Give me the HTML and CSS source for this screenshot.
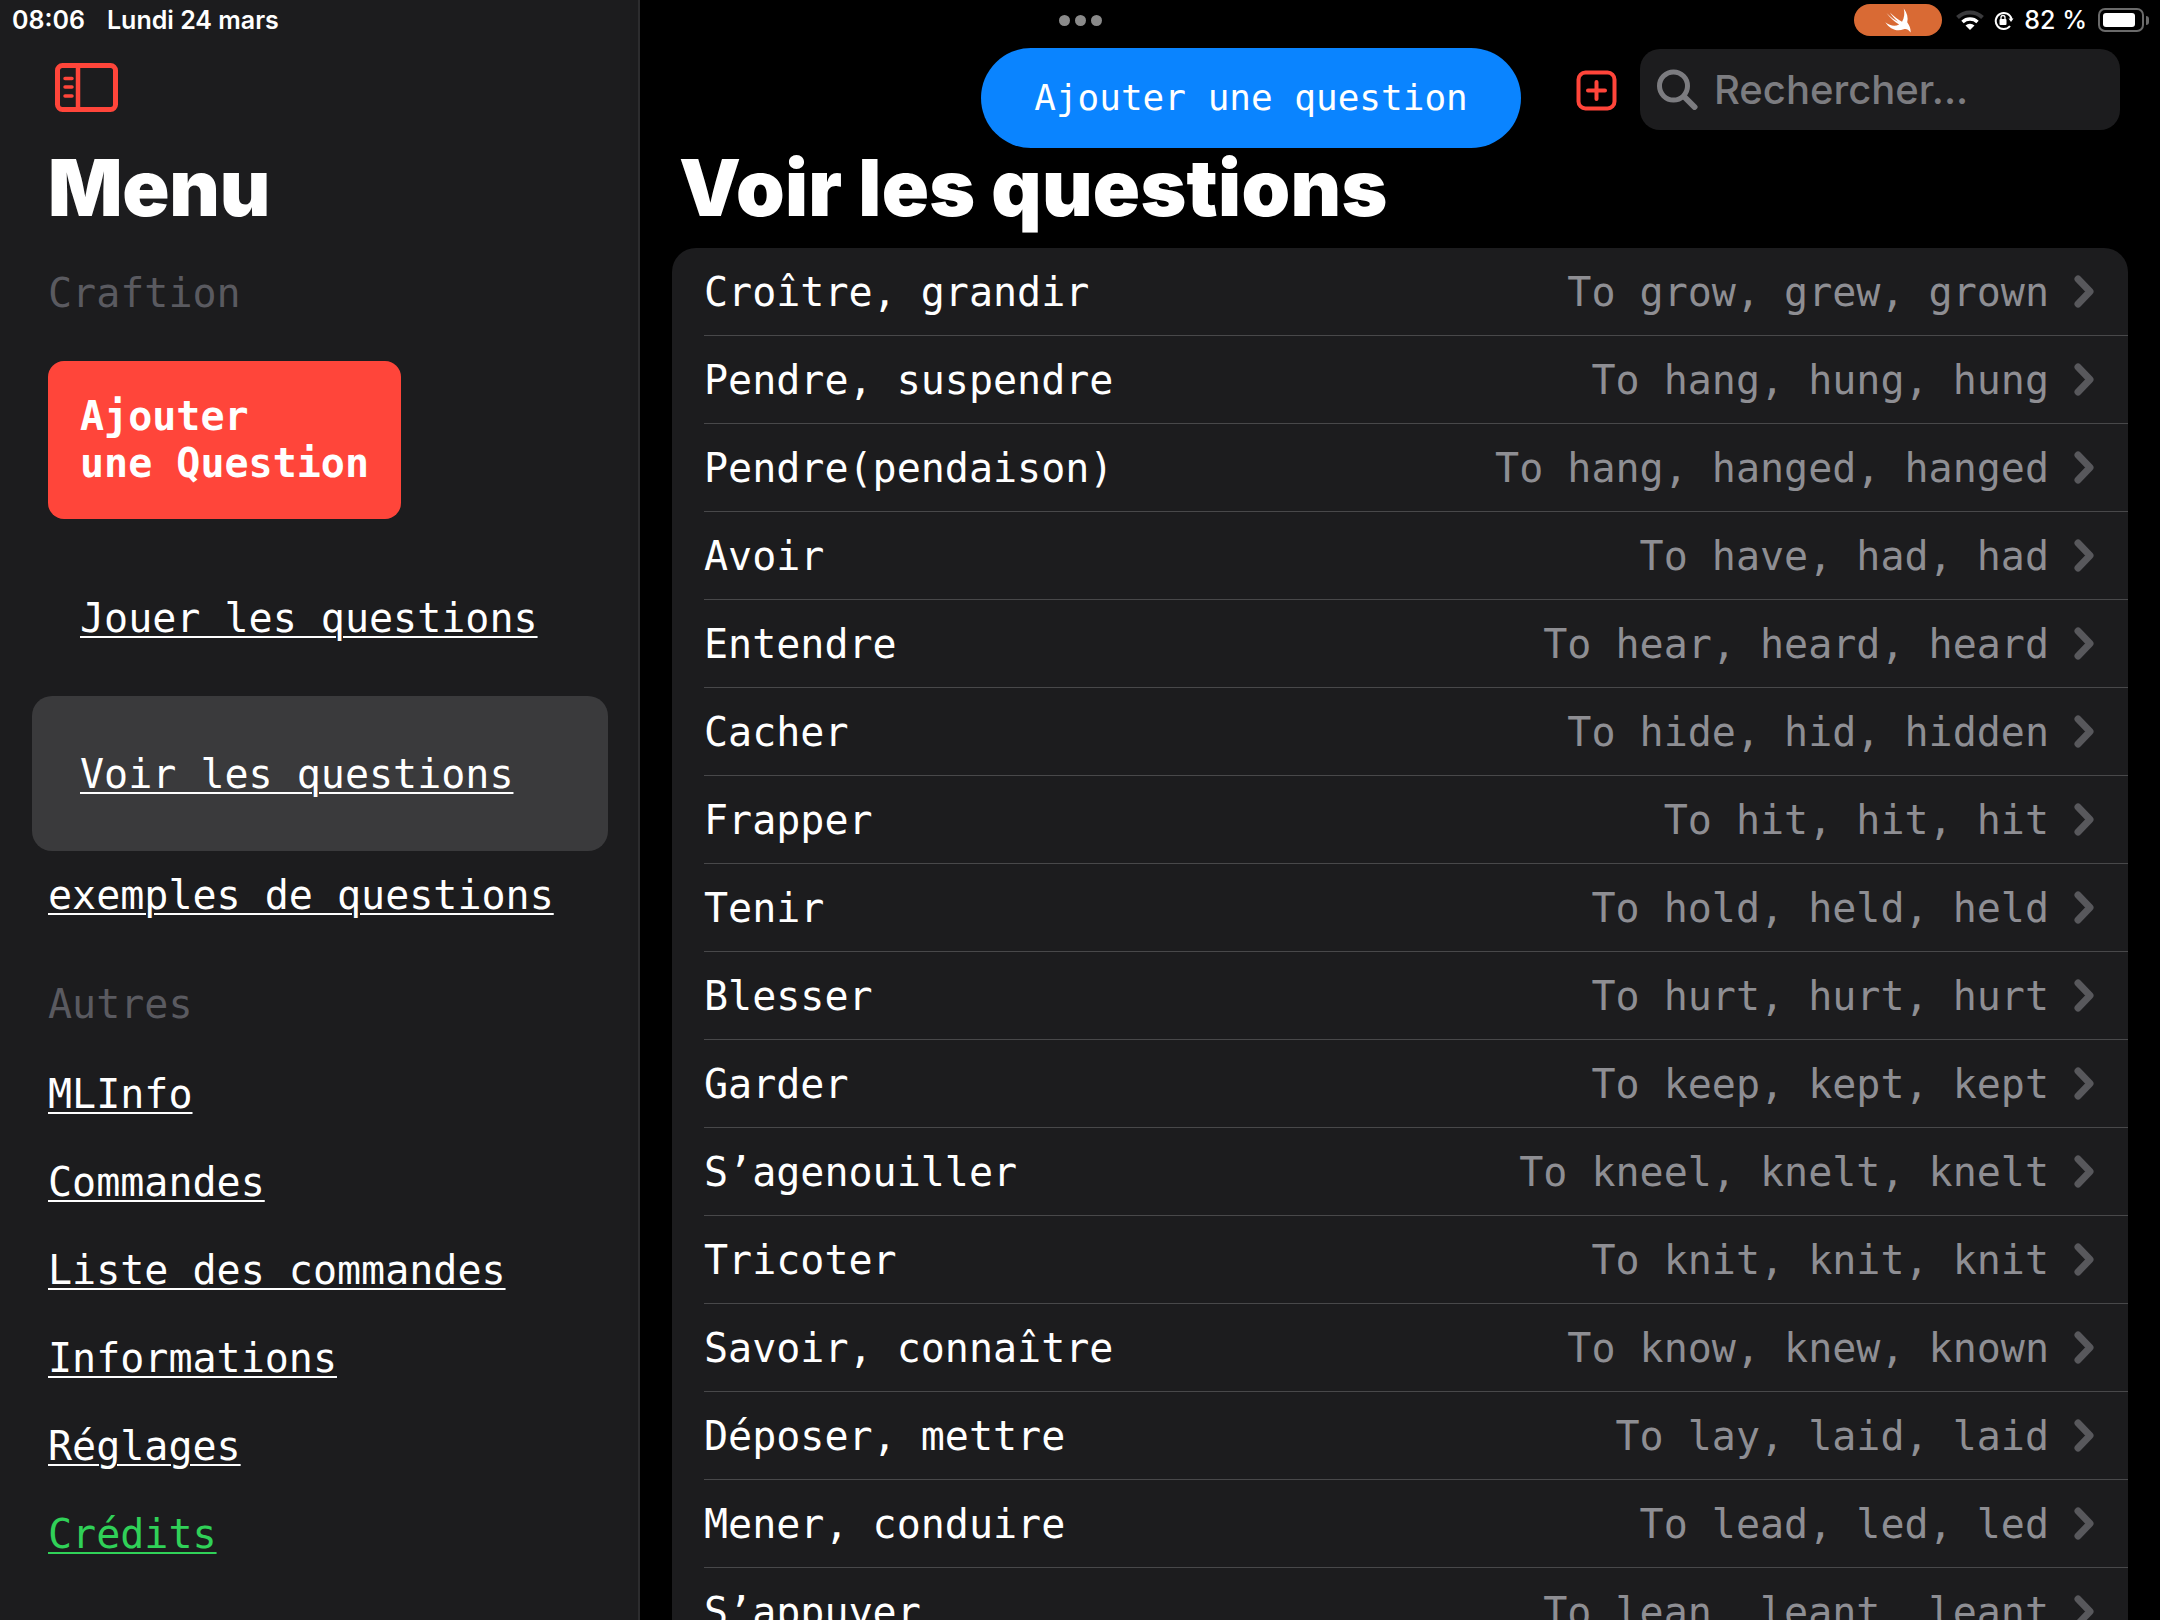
FILE: index.html
```html
<!DOCTYPE html>
<html lang="fr">
<head>
    <meta charset="utf-8" />
    <title>Craftion</title>
    <link rel="stylesheet" href="styles.css">
</head>
<body>
    <aside class="menu">
        <div class="statut-gauche">
            <span>08:06</span>
            <span>Lundi 24 mars</span>
        </div>
        <svg class="icone-menu" viewBox="0 0 63 49" fill="none" stroke="#ff453a">
            <rect x="2.500" y="2.500" width="58" height="44" rx="5" stroke-width="5" />
            <path d="M23 2v45" stroke-width="4.500" />
            <path d="M10 15.500h7M10 24h7M10 33h7" stroke-width="3.500" stroke-linecap="round" />
        </svg>
        <h1 class="titre">Menu</h1>
        <p class="section">Craftion</p>
        <a class="bouton-rouge">Ajouter<br>une Question</a>
        <a class="lien lien-jouer">Jouer les questions</a>
        <div class="selection"><a class="lien">Voir les questions</a></div>
        <a class="lien lien-exemples">exemples de questions</a>
        <p class="section section-autres">Autres</p>
        <nav class="liens">
            <a class="lien">MLInfo</a>
            <a class="lien">Commandes</a>
            <a class="lien">Liste des commandes</a>
            <a class="lien">Informations</a>
            <a class="lien">Réglages</a>
            <a class="lien vert">Crédits</a>
        </nav>
    </aside>

    <main class="contenu">
        <div class="statut">
            <div class="points"><i></i><i></i><i></i></div>
            <div class="statut-droite">
                <span class="pilule">
                    <svg viewBox="0 0 26 23" width="30" height="27" fill="#fff"><path d="M18 1C21 5 22 9 21 13 23 16 24 18 24 22 22 19 20 18.500 18 19 12 21.500 6 19 2 13 6 16 10 17 14 15 10 12.500 6 9 3 5 7 9 10 11 13 12.500 10 10 8 7.500 6 4.500 10 8.500 13 10.500 16.500 12.500 18.500 9 19 5 18 1z" /></svg>
                </span>
                <svg class="wifi" viewBox="0 0 28 20" fill="none">
                    <path d="M1.500 7.500a18 18 0 0 1 25 0" stroke="#3a3a3c" stroke-width="4" />
                    <path d="M6.500 12a11 11 0 0 1 15 0" stroke="#fff" stroke-width="3.500" />
                    <path d="M14 20l-4.500-4.500a6.500 6.500 0 0 1 9 0z" fill="#fff" />
                </svg>
                <svg class="verrou" viewBox="0 0 20 19" fill="none">
                    <path d="M16 15a8 8 0 1 1 1.500-7" stroke="#fff" stroke-width="2" />
                    <path d="M14.500 7.500h5L17 11z" fill="#fff" />
                    <rect x="5.500" y="8" width="7" height="6" rx="1" fill="#fff" />
                    <path d="M7 8V6.500a2 2 0 0 1 4 0V8" stroke="#fff" stroke-width="1.300" />
                </svg>
                <span class="pourcent">82 %</span>
                <span class="batterie"><i></i></span>
                <span class="borne"></span>
            </div>
        </div>

        <div class="barre">
            <a class="bouton-bleu">Ajouter une question</a>
            <svg class="icone-plus" viewBox="0 0 41 41" fill="none" stroke="#ff453a">
                <rect x="2.500" y="2.500" width="36" height="36" rx="7" stroke-width="4" />
                <path d="M20.500 12v17M12 20.500h17" stroke-width="4" stroke-linecap="round" />
            </svg>
            <div class="recherche">
                <svg viewBox="0 0 41 41" width="41" height="41" fill="none" stroke="#7c7c80">
                    <circle cx="16.500" cy="17" r="14" stroke-width="5" />
                    <path d="M27.500 28l10 10" stroke-width="6" stroke-linecap="round" />
                </svg>
                <span>Rechercher...</span>
            </div>
        </div>

        <h1 class="titre titre-page">Voir les questions</h1>

        <ul class="liste">
            <li><span>Croître, grandir</span><span class="verbe">To grow, grew, grown</span><svg class="fleche" viewBox="0 0 20 33" fill="none"><path d="M4 4l12 12.500L4 29" /></svg></li>
            <li><span>Pendre, suspendre</span><span class="verbe">To hang, hung, hung</span><svg class="fleche" viewBox="0 0 20 33" fill="none"><path d="M4 4l12 12.500L4 29" /></svg></li>
            <li><span>Pendre(pendaison)</span><span class="verbe">To hang, hanged, hanged</span><svg class="fleche" viewBox="0 0 20 33" fill="none"><path d="M4 4l12 12.500L4 29" /></svg></li>
            <li><span>Avoir</span><span class="verbe">To have, had, had</span><svg class="fleche" viewBox="0 0 20 33" fill="none"><path d="M4 4l12 12.500L4 29" /></svg></li>
            <li><span>Entendre</span><span class="verbe">To hear, heard, heard</span><svg class="fleche" viewBox="0 0 20 33" fill="none"><path d="M4 4l12 12.500L4 29" /></svg></li>
            <li><span>Cacher</span><span class="verbe">To hide, hid, hidden</span><svg class="fleche" viewBox="0 0 20 33" fill="none"><path d="M4 4l12 12.500L4 29" /></svg></li>
            <li><span>Frapper</span><span class="verbe">To hit, hit, hit</span><svg class="fleche" viewBox="0 0 20 33" fill="none"><path d="M4 4l12 12.500L4 29" /></svg></li>
            <li><span>Tenir</span><span class="verbe">To hold, held, held</span><svg class="fleche" viewBox="0 0 20 33" fill="none"><path d="M4 4l12 12.500L4 29" /></svg></li>
            <li><span>Blesser</span><span class="verbe">To hurt, hurt, hurt</span><svg class="fleche" viewBox="0 0 20 33" fill="none"><path d="M4 4l12 12.500L4 29" /></svg></li>
            <li><span>Garder</span><span class="verbe">To keep, kept, kept</span><svg class="fleche" viewBox="0 0 20 33" fill="none"><path d="M4 4l12 12.500L4 29" /></svg></li>
            <li><span>S’agenouiller</span><span class="verbe">To kneel, knelt, knelt</span><svg class="fleche" viewBox="0 0 20 33" fill="none"><path d="M4 4l12 12.500L4 29" /></svg></li>
            <li><span>Tricoter</span><span class="verbe">To knit, knit, knit</span><svg class="fleche" viewBox="0 0 20 33" fill="none"><path d="M4 4l12 12.500L4 29" /></svg></li>
            <li><span>Savoir, connaître</span><span class="verbe">To know, knew, known</span><svg class="fleche" viewBox="0 0 20 33" fill="none"><path d="M4 4l12 12.500L4 29" /></svg></li>
            <li><span>Déposer, mettre</span><span class="verbe">To lay, laid, laid</span><svg class="fleche" viewBox="0 0 20 33" fill="none"><path d="M4 4l12 12.500L4 29" /></svg></li>
            <li><span>Mener, conduire</span><span class="verbe">To lead, led, led</span><svg class="fleche" viewBox="0 0 20 33" fill="none"><path d="M4 4l12 12.500L4 29" /></svg></li>
            <li><span>S’appuyer</span><span class="verbe">To lean, leant, leant</span><svg class="fleche" viewBox="0 0 20 33" fill="none"><path d="M4 4l12 12.500L4 29" /></svg></li>
        </ul>
    </main>
</body>
</html>
```

FILE: styles.css
```css
/* Page en deux colonnes : menu et contenu */
body {
    margin: 0;
    display: flex;
    height: 100vh;
    overflow: hidden;
    background-color: #000;
    color: #fff;
    font-family: "DejaVu Sans Mono", monospace;
    font-size: 40px;
}

a {
    color: inherit;
}

.menu {
    width: 638px;
    flex-shrink: 0;
    display: flex;
    flex-direction: column;
    align-items: flex-start;
    background-color: #1c1c1e;
    border-right: 2px solid #2c2c2e;
}

.statut-gauche {
    display: flex;
    gap: 22px;
    height: 40px;
    padding-left: 12px;
    align-items: center;
    font-family: Inter, sans-serif;
    font-size: 25px;
    font-weight: 600;
}

.icone-menu {
    width: 63px;
    height: 49px;
    margin: 23px 0 0 55px;
}

.titre {
    margin: 0;
    font-family: Inter, sans-serif;
    font-size: 78px;
    font-weight: 900;
    line-height: 94px;
}

.menu .titre {
    margin: 29px 0 0 48px;
    letter-spacing: -0.3px;
}

.section {
    margin: 34px 0 0 48px;
    line-height: 48px;
    color: #5a5a60;
}

.bouton-rouge {
    box-sizing: border-box;
    width: 353px;
    height: 158px;
    margin: 44px 0 0 48px;
    padding: 32px;
    background-color: #ff453a;
    border-radius: 16px;
    font-weight: bold;
    line-height: 47px;
}

.lien {
    line-height: 48px;
    text-decoration: underline;
    text-decoration-thickness: 2px;
    text-underline-offset: 4px;
}

.lien-jouer {
    margin: 75px 0 0 80px;
}

.selection {
    box-sizing: border-box;
    width: 576px;
    height: 155px;
    margin: 54px 0 0 32px;
    padding: 54px 48px;
    background-color: #3a3a3c;
    border-radius: 20px;
}

.lien-exemples {
    margin: 20px 0 0 48px;
}

.section-autres {
    margin-top: 61px;
}

.liens {
    display: flex;
    flex-direction: column;
    align-items: flex-start;
    gap: 40px;
    margin: 42px 0 0 48px;
}

.vert {
    color: #30d158;
}

.contenu {
    flex: 1;
    min-width: 0;
}

.statut {
    display: flex;
    height: 40px;
    justify-content: flex-end;
    position: relative;
    padding-right: 11px;
}

.points {
    position: absolute;
    left: 419px;
    top: 15px;
    display: flex;
    gap: 5px;
}

.points i {
    width: 11px;
    height: 11px;
    border-radius: 50%;
    background-color: #8a8a8a;
}

.statut-droite {
    display: flex;
    align-items: center;
    height: 40px;
}

.pilule {
    display: flex;
    align-items: center;
    justify-content: center;
    width: 88px;
    height: 32px;
    border-radius: 16px;
    background-color: #d96a34;
}

.wifi {
    width: 28px;
    height: 20px;
    margin-left: 14px;
}

.verrou {
    width: 20px;
    height: 19px;
    margin-left: 10px;
}

.pourcent {
    margin-left: 10px;
    font-family: Inter, sans-serif;
    font-size: 25px;
    font-weight: 500;
}

.batterie {
    display: flex;
    box-sizing: border-box;
    width: 46px;
    height: 24px;
    margin-left: 11px;
    padding: 3px;
    border: 2px solid #6a6a6a;
    border-radius: 7px;
}

.batterie i {
    width: 32px;
    background-color: #fff;
    border-radius: 3px;
}

.borne {
    width: 3px;
    height: 9px;
    margin-left: 2px;
    background-color: #6a6a6a;
    border-radius: 0 3px 3px 0;
}

.barre {
    display: flex;
    align-items: flex-start;
    height: 100px;
    margin-top: 8px;
    padding-left: 341px;
}

.bouton-bleu {
    width: 540px;
    height: 100px;
    line-height: 100px;
    text-align: center;
    font-size: 36px;
    background-color: #0a84ff;
    border-radius: 50px;
}

.icone-plus {
    width: 41px;
    height: 41px;
    margin: 22px 23px 0 55px;
}

.recherche {
    display: flex;
    align-items: center;
    gap: 16px;
    box-sizing: border-box;
    width: 480px;
    height: 81px;
    margin-top: 1px;
    padding-left: 17px;
    background-color: #1c1c1e;
    border-radius: 20px;
    font-family: Inter, sans-serif;
    font-size: 40px;
    font-weight: 500;
    color: #7c7c80;
}

.titre-page {
    margin: -7px 0 0 39px;
    letter-spacing: 0.3px;
}

.liste {
    margin: 13px 32px 0;
    padding: 0;
    list-style: none;
    background-color: #1c1c1e;
    border-radius: 24px 24px 0 0;
}

.liste li {
    display: flex;
    align-items: center;
    box-sizing: border-box;
    height: 88px;
    margin-left: 32px;
    padding-right: 34px;
    border-bottom: 1px solid #48484a;
    white-space: pre;
}

.verbe {
    margin-left: auto;
    color: #8e8e93;
}

.fleche {
    width: 20px;
    height: 33px;
    margin-left: 25px;
    stroke: #58585c;
    stroke-width: 7;
    stroke-linecap: round;
    stroke-linejoin: round;
}
```
